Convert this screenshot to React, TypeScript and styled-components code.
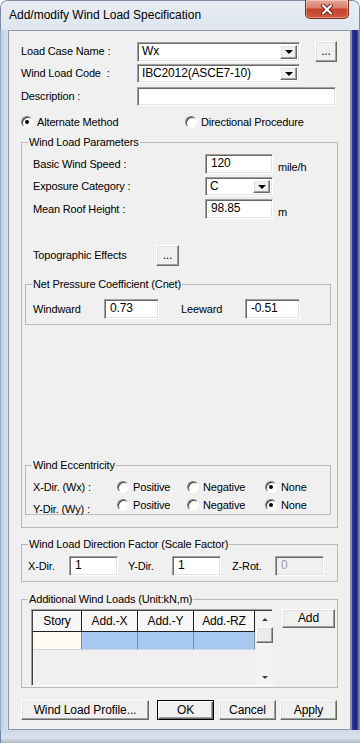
import styled, { createGlobalStyle, css } from 'styled-components'

const GlobalStyle = createGlobalStyle`
  html, body {
    margin: 0;
    padding: 0;
    background: #ffffff;
  }

  body {
    font-family: "Liberation Sans", Arial, sans-serif;
    font-size: 11px;
    letter-spacing: -0.15px;
    color: #000000;
  }

  *, *::before, *::after {
    box-sizing: border-box;
  }
`

// Classic Win32 sunken edge used by edit boxes and combos.
const sunken = css`
  background: #ffffff;
  border: 1px solid;
  border-color: #a0a0a0 #ffffff #ffffff #a0a0a0;
  box-shadow: inset 1px 1px 0 #696969, inset -1px -1px 0 #e3e3e3;
`

// Classic Win32 raised edge used by push buttons.
const raised = css`
  background: #f0f0f0;
  border: 1px solid;
  border-color: #ffffff #696969 #696969 #ffffff;
  box-shadow: inset -1px -1px 0 #a0a0a0, inset 1px 1px 0 #e3e3e3;
`

const CloseGlyph = () => (
  <svg width="14" height="11" viewBox="0 0 14 11">
    <path d="M3 1.5 L11 9.5 M11 1.5 L3 9.5" stroke="#6b1d12" strokeWidth="4" strokeLinecap="round" />
    <path d="M3 1.5 L11 9.5 M11 1.5 L3 9.5" stroke="#ffffff" strokeWidth="2.2" strokeLinecap="round" />
  </svg>
)

interface ComboProps {
  value: string
  width: number
  height: number
}

const Combo = ({ value, width, height }: ComboProps) => (
  <ComboBox $w={width} $h={height}>
    <ComboValue>{value}</ComboValue>
    <DropButton>
      <DownArrow />
    </DropButton>
  </ComboBox>
)

interface RadioProps {
  label: string
  checked?: boolean
  width?: number
}

const Radio = ({ label, checked, width }: RadioProps) => (
  <RadioItem $w={width}>
    <RadioCircle>{checked && <RadioDot />}</RadioCircle>
    <span>{label}</span>
  </RadioItem>
)

export default function App() {
  return (
    <>
      <GlobalStyle />
      <Window>
        <TitleBar>
          <TitleText>Add/modify Wind Load Specification</TitleText>
          <CloseButton aria-label="Close">
            <CloseGlyph />
          </CloseButton>
        </TitleBar>

        <Frame>
          <Client>
            <Row $h={21}>
              <Label $w={116}>Load Case Name :</Label>
              <Combo value="Wx" width={163} height={20} />
              <PushButton $w={22} $h={21} $ml={15}>...</PushButton>
            </Row>
            <Row $h={19} $mt={2}>
              <Label $w={116}>Wind Load Code&nbsp; :</Label>
              <Combo value="IBC2012(ASCE7-10)" width={163} height={19} />
            </Row>
            <Row $h={19} $mt={4}>
              <Label $w={116}>Description :</Label>
              <TextBox $w={199} $h={19} />
            </Row>

            <Row $h={14} $mt={9}>
              <Radio label="Alternate Method" checked width={164} />
              <Radio label="Directional Procedure" />
            </Row>

            <Group $mt={7}>
              <GroupTitle>Wind Load Parameters</GroupTitle>
              <GroupBody $pt={5} $pb={12}>
                <Row $h={20} $ml={11}>
                  <Label $w={172}>Basic Wind Speed :</Label>
                  <TextBox $w={68} $h={20}>120</TextBox>
                  <Unit>mile/h</Unit>
                </Row>
                <Row $h={19} $ml={11} $mt={3}>
                  <Label $w={172}>Exposure Category :</Label>
                  <Combo value="C" width={68} height={19} />
                </Row>
                <Row $h={20} $ml={11} $mt={3}>
                  <Label $w={172}>Mean Roof Height :</Label>
                  <TextBox $w={68} $h={20}>98.85</TextBox>
                  <Unit>m</Unit>
                </Row>
                <Row $h={21} $ml={11} $mt={26}>
                  <Label $w={123}>Topographic Effects</Label>
                  <PushButton $w={23} $h={21}>...</PushButton>
                </Row>

                <InnerGroup $mt={12}>
                  <GroupTitle>Net Pressure Coefficient (Cnet)</GroupTitle>
                  <GroupBody $pt={8} $pb={5}>
                    <Row $h={20} $ml={7}>
                      <Label $w={71}>Windward</Label>
                      <TextBox $w={55} $h={20}>0.73</TextBox>
                      <Label $w={64} $ml={22}>Leeward</Label>
                      <TextBox $w={55} $h={20}>-0.51</TextBox>
                    </Row>
                  </GroupBody>
                </InnerGroup>

                <InnerGroup $mt={134}>
                  <GroupTitle>Wind Eccentricity</GroupTitle>
                  <GroupBody $pt={8} $pb={2}>
                    <Row $h={14} $ml={7}>
                      <Label $w={84}>X-Dir. (Wx) :</Label>
                      <Radio label="Positive" width={70} />
                      <Radio label="Negative" width={78} />
                      <Radio label="None" checked />
                    </Row>
                    <Row $h={14} $ml={7} $mt={4}>
                      <Label $w={84} $dy={4}>Y-Dir. (Wy) :</Label>
                      <Radio label="Positive" width={70} />
                      <Radio label="Negative" width={78} />
                      <Radio label="None" checked />
                    </Row>
                  </GroupBody>
                </InnerGroup>
              </GroupBody>
            </Group>

            <Group $mt={10}>
              <GroupTitle>Wind Load Direction Factor (Scale Factor)</GroupTitle>
              <GroupBody $pt={5} $pb={5}>
                <Row $h={20} $ml={6}>
                  <Label $w={41}>X-Dir.</Label>
                  <TextBox $w={49} $h={20}>1</TextBox>
                  <Label $w={44} $ml={10}>Y-Dir.</Label>
                  <TextBox $w={49} $h={20}>1</TextBox>
                  <Label $w={43} $ml={11}>Z-Rot.</Label>
                  <TextBox $w={49} $h={20} $disabled>0</TextBox>
                </Row>
              </GroupBody>
            </Group>

            <Group $mt={11}>
              <GroupTitle>Additional Wind Loads (Unit:kN,m)</GroupTitle>
              <GroupBody $pt={3} $pb={1}>
                <LoadsRow>
                  <GridBox>
                    <GridTable>
                      <GridHeader>
                        <HeaderCell>Story</HeaderCell>
                        <HeaderCell>Add.-X</HeaderCell>
                        <HeaderCell>Add.-Y</HeaderCell>
                        <HeaderCell>Add.-RZ</HeaderCell>
                      </GridHeader>
                      <GridDataRow>
                        <DataCell $kind="story" />
                        <DataCell $kind="value" />
                        <DataCell $kind="value" />
                        <DataCell $kind="value" />
                      </GridDataRow>
                    </GridTable>
                    <ScrollBar>
                      <ScrollArrow $up />
                      <ScrollThumb />
                      <ScrollTrack />
                      <ScrollArrow />
                    </ScrollBar>
                  </GridBox>
                  <PushButton $w={53} $h={19} $ml={9}>Add</PushButton>
                </LoadsRow>
              </GroupBody>
            </Group>

            <Row $h={20} $mt={12}>
              <PushButton $w={128} $h={20}>Wind Load Profile...</PushButton>
              <PushButton $w={57} $h={20} $ml={8} $default>OK</PushButton>
              <PushButton $w={57} $h={20} $ml={5}>Cancel</PushButton>
              <PushButton $w={57} $h={20} $ml={4}>Apply</PushButton>
            </Row>
          </Client>
        </Frame>
        <BottomEdge />
      </Window>
    </>
  )
}

const Window = styled.div`
  width: 360px;
  height: 743px;
  display: flex;
  flex-direction: column;
  overflow: hidden;
  border-radius: 7px 7px 0 0;
`

const TitleBar = styled.div`
  flex: none;
  height: 30px;
  display: flex;
  align-items: flex-start;
  justify-content: space-between;
  padding: 0 10px 0 8px;
  border: 1px solid #7b8ca3;
  border-bottom: none;
  border-radius: 7px 7px 0 0;
  background: linear-gradient(to bottom, #e8edf3 0%, #dfe6ee 100%);
`

const TitleText = styled.span`
  font-family: "Liberation Sans", Arial, sans-serif;
  font-size: 12px;
  letter-spacing: 0;
  line-height: 29px;
  color: #000000;
`

const CloseButton = styled.button`
  width: 44px;
  height: 19px;
  margin-top: -1px;
  padding: 0;
  display: flex;
  align-items: center;
  justify-content: center;
  border: 1px solid #7a2d22;
  border-top: none;
  border-radius: 0 0 5px 5px;
  background: linear-gradient(to bottom, #eaa698 0%, #d9826f 42%, #c2432d 52%, #d2593f 100%);
  box-shadow: inset 0 0 0 1px rgba(255, 255, 255, 0.35);
`

const Frame = styled.div`
  flex: 1;
  display: flex;
  padding: 0 9px 0 8px;
  background: linear-gradient(
    to right,
    #6f86a4 0,
    #bfd1e5 1px,
    #d4e0ec 7px,
    #d4e0ec 351px,
    #2b3aa0 352px,
    #17217f 356px,
    #4f577c 358px,
    #9aa3b5 360px
  );
`

const BottomEdge = styled.div`
  flex: none;
  height: 13px;
  border-left: 1px solid #6f86a4;
  background: linear-gradient(to bottom, #cdd9e6 0%, #d8e2ec 60%, #aeb9c6 100%);
`

const Client = styled.div`
  flex: 1;
  display: flex;
  flex-direction: column;
  padding: 10px 12px 0 12px;
  border: 1px solid #8c98a6;
  background: #f0f0f0;
`

const Row = styled.div<{ $h: number; $mt?: number; $ml?: number }>`
  display: flex;
  align-items: center;
  height: ${(p) => p.$h}px;
  margin-top: ${(p) => p.$mt ?? 0}px;
  margin-left: ${(p) => p.$ml ?? 0}px;
  flex: none;
`

const Label = styled.span<{ $w: number; $ml?: number; $dy?: number }>`
  flex: none;
  width: ${(p) => p.$w}px;
  margin-left: ${(p) => p.$ml ?? 0}px;
  position: relative;
  top: ${(p) => p.$dy ?? 0}px;
  white-space: nowrap;
  line-height: 13px;
`

const Unit = styled.span`
  align-self: flex-end;
  margin-left: 5px;
  line-height: 13px;
`

const TextBox = styled.div<{ $w: number; $h: number; $disabled?: boolean }>`
  ${sunken}
  flex: none;
  width: ${(p) => p.$w}px;
  height: ${(p) => p.$h}px;
  padding: 2px 0 0 5px;
  line-height: 13px;
  font-size: 12px;
  ${(p) =>
    p.$disabled &&
    css`
      background: #f0f0f0;
      color: #a0a0a0;
    `}
`

const ComboBox = styled.div<{ $w: number; $h: number }>`
  ${sunken}
  flex: none;
  display: flex;
  width: ${(p) => p.$w}px;
  height: ${(p) => p.$h}px;
  padding: 2px;
`

const ComboValue = styled.span`
  flex: 1;
  padding: 0 0 0 2px;
  line-height: 13px;
  font-size: 12px;
  white-space: nowrap;
  overflow: hidden;
`

const DropButton = styled.span`
  ${raised}
  flex: none;
  width: 17px;
  display: flex;
  align-items: center;
  justify-content: center;
`

const DownArrow = styled.span`
  width: 0;
  height: 0;
  border-left: 4px solid transparent;
  border-right: 4px solid transparent;
  border-top: 4px solid #000000;
`

const PushButton = styled.button<{ $w: number; $h: number; $ml?: number; $default?: boolean }>`
  ${raised}
  flex: none;
  width: ${(p) => p.$w}px;
  height: ${(p) => p.$h}px;
  margin-left: ${(p) => p.$ml ?? 0}px;
  padding: 0;
  font-family: "Liberation Sans", Arial, sans-serif;
  font-size: 12px;
  letter-spacing: -0.1px;
  color: #000000;
  line-height: 13px;
  ${(p) =>
    p.$default &&
    css`
      border-color: #000000;
      box-shadow: inset 1px 1px 0 #ffffff, inset -1px -1px 0 #696969, inset -2px -2px 0 #a0a0a0;
    `}
`

const RadioItem = styled.span<{ $w?: number }>`
  flex: none;
  display: flex;
  align-items: center;
  width: ${(p) => (p.$w ? `${p.$w}px` : 'auto')};
  line-height: 13px;
  white-space: nowrap;
`

const RadioCircle = styled.span`
  flex: none;
  width: 12px;
  height: 12px;
  margin-right: 4px;
  border-radius: 50%;
  border: 1px solid;
  border-color: #808080 #ffffff #ffffff #808080;
  background: #ffffff;
  box-shadow: inset 1px 1px 0 #404040;
  display: flex;
  align-items: center;
  justify-content: center;
`

const RadioDot = styled.span`
  width: 4px;
  height: 4px;
  border-radius: 50%;
  background: #000000;
`

const Group = styled.fieldset<{ $mt?: number }>`
  flex: none;
  margin: ${(p) => p.$mt ?? 0}px 0 0 0;
  padding: 0;
  min-width: 0;
  border: 1px solid #b9b9b9;
  border-radius: 0;
`

const InnerGroup = styled(Group)`
  margin-left: 3px;
  margin-right: 6px;
`

const GroupTitle = styled.legend`
  margin-left: 6px;
  padding: 0 1px;
  line-height: 13px;
  font-size: 11px;
`

const GroupBody = styled.div<{ $pt: number; $pb: number }>`
  display: flex;
  flex-direction: column;
  padding-top: ${(p) => p.$pt}px;
  padding-bottom: ${(p) => p.$pb}px;
`

const LoadsRow = styled.div`
  display: flex;
  align-items: flex-start;
  margin-left: 9px;
`

const GridBox = styled.div`
  flex: none;
  display: flex;
  width: 242px;
  height: 77px;
  border: 1px solid;
  border-color: #a0a0a0 #ffffff #ffffff #a0a0a0;
  box-shadow: inset 1px 1px 0 #404040;
  padding: 1px 0 0 1px;
  background: #f0f0f0;
`

const GridTable = styled.div`
  flex: none;
  width: 222px;
  display: flex;
  flex-direction: column;
`

const GridHeader = styled.div`
  display: grid;
  grid-template-columns: 49px 56px 56px 61px;
  height: 21px;
`

const HeaderCell = styled.div`
  display: flex;
  align-items: center;
  justify-content: center;
  font-size: 12px;
  background: #f7f7f7;
  border-right: 1px solid #202020;
  border-bottom: 1px solid #202020;
  box-shadow: inset 1px 1px 0 #ffffff;
`

const GridDataRow = styled.div`
  display: grid;
  grid-template-columns: 49px 56px 56px 61px;
  height: 18px;
`

const DataCell = styled.div<{ $kind: 'story' | 'value' }>`
  background: ${(p) => (p.$kind === 'story' ? '#fffbf0' : '#a7c9f0')};
  border-right: 1px solid #7d8ea4;
  border-bottom: 1px solid #c8d6e6;
`

const ScrollBar = styled.div`
  flex: none;
  width: 17px;
  margin-left: 1px;
  display: flex;
  flex-direction: column;
  background: #f4f4f4;
`

const ScrollArrow = styled.div<{ $up?: boolean }>`
  flex: none;
  height: 16px;
  display: flex;
  align-items: center;
  justify-content: center;

  &::before {
    content: '';
    width: 0;
    height: 0;
    border-left: 3px solid transparent;
    border-right: 3px solid transparent;
    ${(p) => (p.$up ? 'border-bottom: 3px solid #404040;' : 'border-top: 3px solid #404040;')}
  }
`

const ScrollThumb = styled.div`
  ${raised}
  flex: none;
  height: 16px;
  background: #ececec;
`

const ScrollTrack = styled.div`
  flex: 1;
`
